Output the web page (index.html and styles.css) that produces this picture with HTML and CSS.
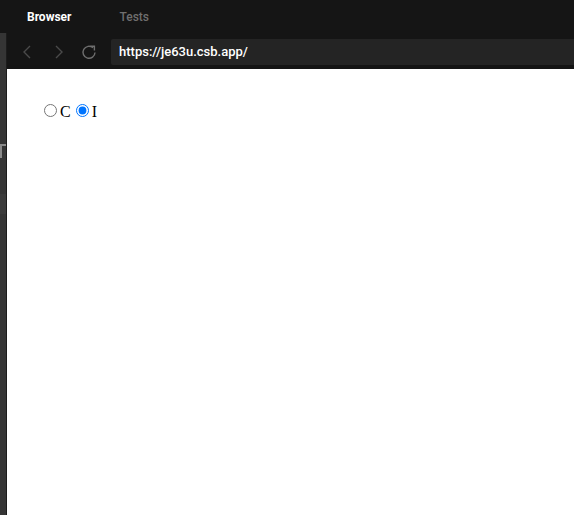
FILE: index.html
```html
<!DOCTYPE html>
<html>
<head>
<meta charset="utf-8">
<link rel="stylesheet" href="styles.css">
</head>
<body>
<div class="tabs">
  <span class="tab active">Browser</span>
  <span class="tab">Tests</span>
</div>
<div class="row">
  <div class="strip">
    <div class="strip-t"></div>
    <div class="strip-band"></div>
  </div>
  <div class="main">
    <div class="toolbar">
      <div class="nav">
        <svg class="ico back" width="12" height="14" viewBox="0 0 12 14"><path d="M8 1 L2 7 L8 13" fill="none" stroke="#4a4a4a" stroke-width="1.4"/></svg>
        <svg class="ico fwd" width="12" height="14" viewBox="0 0 12 14"><path d="M3 1 L9 7 L3 13" fill="none" stroke="#4a4a4a" stroke-width="1.4"/></svg>
        <svg class="ico reload" width="16" height="16" viewBox="0 0 16 16"><path d="M14 8.5 A6 6 0 1 1 12 3.8" fill="none" stroke="#6e6e6e" stroke-width="1.4"/><path d="M9.2 2.2 L13.4 2.2 L13.4 6.4" fill="none" stroke="#6e6e6e" stroke-width="1.4"/></svg>
      </div>
      <div class="url">https://je63u.csb.app/</div>
    </div>
    <div class="page">
      <div class="form"><input type="radio" name="r">C<input type="radio" name="r" checked>I</div>
    </div>
  </div>
</div>
</body>
</html>
```
FILE: styles.css
```css
html, body {
  margin: 0;
  padding: 0;
  height: 100%;
  background: #fff;
}
body {
  display: flex;
  flex-direction: column;
  overflow: hidden;
}
.tabs {
  height: 33px;
  background: #151515;
  display: flex;
  align-items: center;
  font-family: Roboto, "Liberation Sans", sans-serif;
  font-size: 12px;
  flex: none;
}
.tab {
  color: #6f6f6f;
  font-weight: 500;
  margin-left: 27px;
}
.tab.active {
  color: #ffffff;
  font-weight: 700;
}
.tab + .tab {
  margin-left: 48px;
}
.row {
  flex: 1;
  display: flex;
}
.strip {
  width: 6px;
  background: #353535;
  border-right: 1px solid #1c1c1c;
  flex: none;
  padding-top: 111px;
}
.strip-t {
  width: 6px;
  height: 14px;
  border-top: 2px solid #8a8a8a;
  box-sizing: border-box;
  position: relative;
}
.strip-t::after {
  content: "";
  position: absolute;
  left: 0;
  top: 0;
  width: 2px;
  height: 12px;
  background: #8a8a8a;
}
.strip-band {
  margin-top: 36px;
  height: 20px;
  background: #3b3b3b;
}
.main {
  flex: 1;
  display: flex;
  flex-direction: column;
}
.toolbar {
  height: 36px;
  background: #151515;
  display: flex;
  align-items: flex-start;
  padding-top: 6px;
  box-sizing: border-box;
  border-bottom: 4px solid #141414;
}
.nav {
  width: 104px;
  height: 26px;
  display: flex;
  align-items: center;
  padding-left: 15px;
  box-sizing: border-box;
}
.ico.fwd { margin-left: 19px; }
.ico.reload { margin-left: 16px; }
.url {
  flex: 1;
  height: 26px;
  background: #242424;
  border-radius: 2px 0 0 2px;
  color: #ffffff;
  font-family: Roboto, "Liberation Sans", sans-serif;
  font-size: 13px;
  font-weight: 500;
  line-height: 26px;
  padding-left: 8px;
}
.page {
  flex: 1;
  background: #fff;
  padding: 32px 0 0 32px;
  font-family: "Liberation Serif", serif;
  font-size: 16px;
  color: #000;
}
```
